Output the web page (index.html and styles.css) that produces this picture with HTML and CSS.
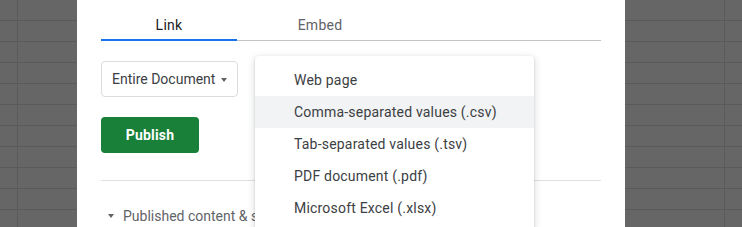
FILE: index.html
```html
<!DOCTYPE html>
<html>
<head>
<meta charset="utf-8">
<link rel="stylesheet" href="styles.css">
</head>
<body>
<div class="dialog">
  <div class="tabs">
    <div class="tab tab-link active">Link</div>
    <div class="tab tab-embed">Embed</div>
  </div>
  <div class="controls">
    <div class="select">
      <span class="select-label">Entire Document</span>
      <span class="caret"></span>
    </div>
    <button class="publish">Publish</button>
  </div>
  <div class="section">
    <span class="tri"></span>
    <span class="section-label">Published content &amp; settings</span>
  </div>
  <ul class="menu">
    <li class="item">Web page</li>
    <li class="item hover">Comma-separated values (.csv)</li>
    <li class="item">Tab-separated values (.tsv)</li>
    <li class="item">PDF document (.pdf)</li>
    <li class="item">Microsoft Excel (.xlsx)</li>
  </ul>
</div>
</body>
</html>
```

FILE: styles.css
```css
html, body {
  margin: 0;
  padding: 0;
  height: 227px;
  overflow: hidden;
}
body {
  font-family: Roboto, "Liberation Sans", Arial, sans-serif;
  background-color: #666666;
  background-image:
    linear-gradient(to right, transparent 17px, #5a5a5a 17px, #5a5a5a 18px, transparent 18px),
    linear-gradient(to right, transparent 724px, #5a5a5a 724px, #5a5a5a 725px, transparent 725px),
    repeating-linear-gradient(to bottom, transparent 0, transparent 20px, #5a5a5a 20px, #5a5a5a 21px);
}
.dialog {
  position: relative;
  margin-left: 77px;
  width: 548px;
  height: 227px;
  background: #fff;
  box-sizing: border-box;
  padding: 0 24px;
}
.tabs {
  display: flex;
  border-bottom: 1px solid #c4c4c4;
}
.tab {
  position: relative;
  text-align: center;
  font-size: 14px;
  font-weight: 400;
  letter-spacing: 0.25px;
  line-height: 20px;
  padding: 15px 0 5px;
  color: #5f6368;
}
.tab-link { width: 136px; }
.tab-embed { width: 166px; }
.tab.active { color: #202124; }
.tab.active::after {
  content: "";
  position: absolute;
  left: 0;
  right: 0;
  bottom: -1px;
  height: 2px;
  background: #1a73e8;
}
.controls {
  display: flex;
  flex-direction: column;
  align-items: flex-start;
  gap: 20px;
  padding: 20px 0 27px;
  border-bottom: 1px solid #e0e0e0;
}
.select {
  display: flex;
  align-items: center;
  box-sizing: border-box;
  width: 137px;
  height: 36px;
  border: 1px solid #dadce0;
  border-radius: 4px;
  padding: 0 10px 0 10px;
  font-size: 14px;
  line-height: 20px;
  color: #3c4043;
}
.select-label { flex: 1; white-space: nowrap; }
.caret {
  width: 0;
  height: 0;
  border-left: 3.5px solid transparent;
  border-right: 3.5px solid transparent;
  border-top: 4px solid #5f6368;
  margin-top: 1px;
}
.publish {
  box-sizing: border-box;
  width: 98px;
  height: 36px;
  border: none;
  border-radius: 4px;
  background: #188038;
  color: #fff;
  font-family: Roboto, "Liberation Sans", Arial, sans-serif;
  font-size: 14px;
  font-weight: 700;
  letter-spacing: 0.2px;
  padding: 0;
}
.section {
  display: flex;
  align-items: center;
  padding-top: 25px;
  padding-left: 7px;
  font-size: 14px;
  line-height: 20px;
  color: #5f6368;
}
.tri {
  width: 0;
  height: 0;
  border-left: 3px solid transparent;
  border-right: 3px solid transparent;
  border-top: 4px solid #5f6368;
  margin-right: 9px;
  margin-top: -1px;
}
.menu {
  position: absolute;
  left: 178px;
  top: 56px;
  width: 279px;
  margin: 0;
  padding: 8px 0;
  list-style: none;
  background: #fff;
  border-radius: 4px;
  box-shadow: 0 1px 2px rgba(60,64,67,.25), 0 2px 6px 2px rgba(60,64,67,.12);
}
.item {
  height: 32px;
  box-sizing: border-box;
  padding: 6px 16px 6px 39px;
  font-size: 14px;
  letter-spacing: 0.2px;
  line-height: 20px;
  color: #3c4043;
  white-space: nowrap;
}
.item.hover { background: #f1f3f4; }
```
